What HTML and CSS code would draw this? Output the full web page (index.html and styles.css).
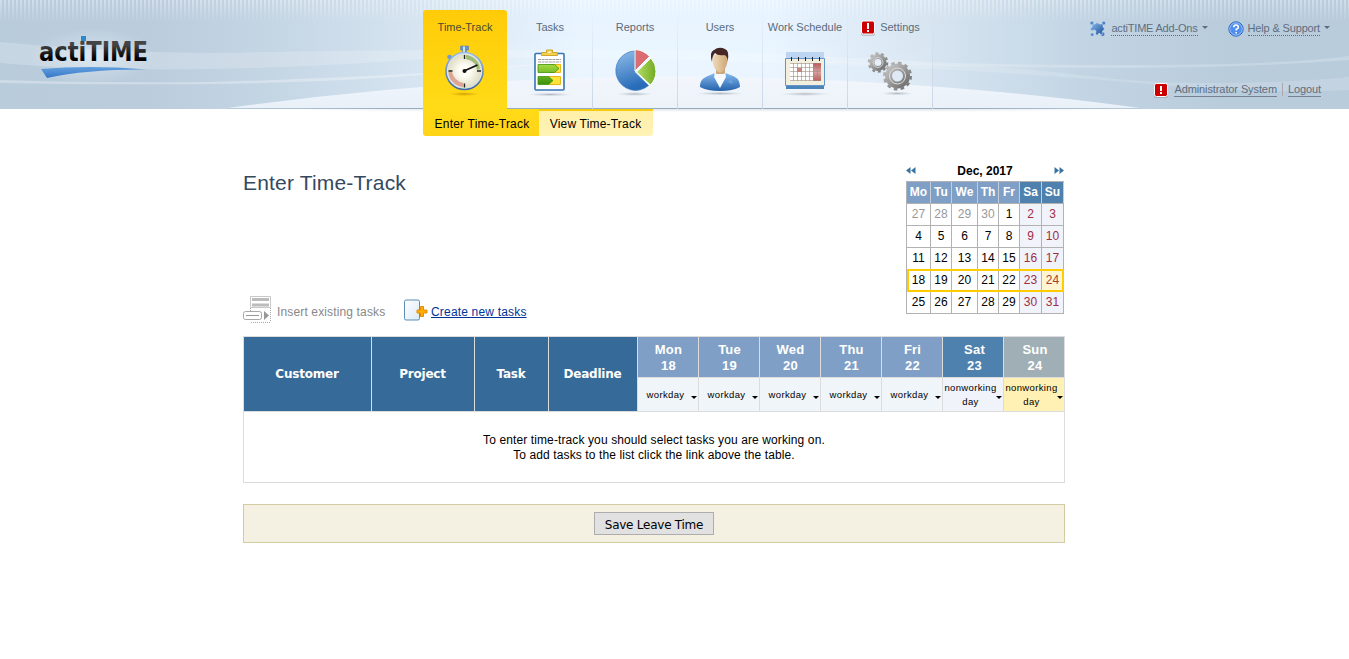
FILE: index.html
```html
<!DOCTYPE html>
<html lang="en">
<head>
<meta charset="utf-8">
<title>actiTIME - Enter Time-Track</title>
<link rel="stylesheet" href="styles.css">
</head>
<body>
<header class="header">
  <svg class="header-bg" width="1349" height="112" viewBox="0 0 1349 112">
    <defs>
      <linearGradient id="sky"><stop offset="0" stop-color="#b9ccdc"/><stop offset=".11" stop-color="#bbcddd"/><stop offset=".2" stop-color="#c4d5e4"/><stop offset=".32" stop-color="#d8e6f2"/><stop offset=".43" stop-color="#e8f4ff"/><stop offset=".57" stop-color="#e8f4ff"/><stop offset=".68" stop-color="#d8e6f2"/><stop offset=".8" stop-color="#c3d5e4"/><stop offset=".91" stop-color="#b9ccdc"/><stop offset="1" stop-color="#b9ccdc"/></linearGradient>
      <linearGradient id="fade" x2="0" y2="1"><stop offset="0" stop-color="#fff"/><stop offset="1" stop-color="#000"/></linearGradient>
      <linearGradient id="hill" x2="0" y2="1"><stop offset="0" stop-color="#f1f6fd"/><stop offset="1" stop-color="#e9f0f7"/></linearGradient>
      <linearGradient id="shade" x2="0" y2="1"><stop offset="0" stop-color="#e2e4e7"/><stop offset="1" stop-color="#fff"/></linearGradient>
      <linearGradient id="edge"><stop offset="0" stop-color="#b8cbdb"/><stop offset=".2" stop-color="#95abc1"/><stop offset=".8" stop-color="#95abc1"/><stop offset="1" stop-color="#b8cbdb"/></linearGradient>
      <linearGradient id="sides"><stop offset="0" stop-color="#fff" stop-opacity="0"/><stop offset=".2" stop-color="#fff"/><stop offset=".8" stop-color="#fff"/><stop offset="1" stop-color="#fff" stop-opacity="0"/></linearGradient>
      <pattern id="stripes" width="4" height="22" patternUnits="userSpaceOnUse"><path d="M0 0h2v22H0z" fill="#fff" opacity=".36"/></pattern>
      <mask id="fadeMask"><path d="M0 0h1349v22H0z" fill="url(#fade)"/></mask>
      <mask id="sideMask"><path d="M300 109h800v3H300z" fill="url(#sides)"/></mask>
    </defs>
    <path d="M0 0h1349v109H0z" fill="url(#sky)"/>
    <path d="M0 0h1349v22H0z" fill="url(#stripes)" mask="url(#fadeMask)"/>
    <g fill="#fff">
      <path opacity=".2" d="M0 42Q100 52 210 53Q320 51 423 50H680Q800 55 930 62Q1000 65 1140 65T1349 56V60Q1240 68 1130 68Q1000 68 930 65L680 60Q550 56 423 59Q320 67 210 69Q90 71 0 63z"/>
      <path opacity=".3" d="M0 80Q100 83 210 82Q320 79 423 73L560 62V63L423 75Q320 83 210 84Q90 85 0 83z"/>
      <path opacity=".15" d="M680 58L930 64Q1010 66 1080 75T1220 83Q1300 82 1349 77V90Q1260 94 1160 85Q1040 74 930 69L680 60z"/>
    </g>
    <path d="M228 108Q450 77 680 76Q930 79 1140 108z" fill="url(#hill)"/>
    <path d="M300 109h800v3H300z" fill="url(#shade)" mask="url(#sideMask)"/>
    <path d="M228 108h912v1H228z" fill="url(#edge)"/>
  </svg>
  <svg class="logo" width="132" height="60" viewBox="-8 -6 132 60">
    <defs>
      <linearGradient id="ink" x2="0" y2="1"><stop offset=".3" stop-color="#444"/><stop offset=".75" stop-color="#000"/></linearGradient>
      <linearGradient id="swoosh" x2="0" y2="1"><stop offset="0" stop-color="#629fdc"/><stop offset="1" stop-color="#3477c9"/></linearGradient>
      <radialGradient id="halo"><stop offset="0" stop-color="#fff" stop-opacity=".4"/><stop offset="1" stop-color="#fff" stop-opacity="0"/></radialGradient>
    </defs>
    <ellipse cx="56" cy="24" rx="63" ry="28" fill="url(#halo)"/>
    <text class="logo-text" x="3" y="28.500" textLength="109" lengthAdjust="spacingAndGlyphs" fill="url(#ink)">actiTIME</text>
    <path d="M45 4h5v5h-5z" fill="#2d88cc"/>
    <path d="M5 37Q55 33 111 37.500Q52 37 11 46z" fill="url(#swoosh)"/>
  </svg>
  <nav class="tabs">
    <a class="tab tab-active"><span>Time-Track</span>
      <svg width="50" height="52" viewBox="0 0 50 52"><defs><radialGradient id="dial"><stop offset=".3" stop-color="#fffff8"/><stop offset="1" stop-color="#dfddc4"/></radialGradient><linearGradient id="steel" x2="0" y2="1"><stop offset="0" stop-color="#9dbbe0"/><stop offset="1" stop-color="#42699c"/></linearGradient><radialGradient id="goldShadow"><stop offset="0" stop-color="#b68100" stop-opacity=".7"/><stop offset="1" stop-color="#c79300" stop-opacity="0"/></radialGradient><radialGradient id="softShadow"><stop offset="0" stop-color="#8b919b" stop-opacity=".6"/><stop offset="1" stop-color="#b0b6bf" stop-opacity="0"/></radialGradient></defs><ellipse cx="24" cy="50" rx="15" ry="2" fill="url(#goldShadow)"/><path d="M20.500 2h8v4h-2v4h-4V6h-2z" fill="#6792c6" stroke="#4c7bb5" stroke-width=".5"/><path d="M23 2.500h2v6h-2z" fill="#cfe2f5"/><circle cx="9.500" cy="13" r="2.300" fill="#6f9bcc"/><circle cx="24.500" cy="27" r="18.500" fill="#d9e8f5" stroke="url(#steel)" stroke-width="1.600"/><circle cx="24.500" cy="27" r="16.800" fill="url(#dial)"/><path d="M26 15V11A16 16 0 0 1 40 25L37 26Q36 17 26 15z" fill="#7faa50" opacity=".7"/><path d="M12 28H8.500A16 16 0 0 0 23.500 43V39Q14 37 12 28z" fill="#d98275" opacity=".65"/><path d="M24.500 11v4M24.500 39.500v4M8.500 27h4M37 27h4" stroke="#222" stroke-width="1.300"/><path d="M24 27L37.500 21" stroke="#111" stroke-width="1.700"/><circle cx="24.500" cy="27" r="2" fill="#111"/></svg></a>
    <a class="tab"><span>Tasks</span>
      <svg width="50" height="52" viewBox="0 0 50 52"><defs><linearGradient id="green" x2="0" y2="1"><stop offset="0" stop-color="#a5da42"/><stop offset="1" stop-color="#39900b"/></linearGradient></defs><ellipse cx="25" cy="50.500" rx="22" ry="2" fill="url(#softShadow)"/><rect x="10" y="9.500" width="29" height="36.500" rx="1" fill="#fff" stroke="#3974b5" stroke-width="1.600"/><path d="M16.500 11.500v-3h5V6h6v2.500h5v3z" fill="#f4cf50" stroke="#cda72a"/><path d="M23.500 7.500h2V9h-2z" fill="#fff"/><path d="M13 15.500h23M13 18h23" stroke="#888" stroke-width=".8" stroke-dasharray="3 .6"/><path d="M25.500 20.500h10v8h-10zM23.500 32.500h12v8h-12z" fill="#ffe33b" stroke="#e5b817"/><path d="M13 20.500H29.500l4.500 4-4.500 4H13zM13 32.500H23.500l4.500 4-4.500 4H13z" fill="url(#green)" stroke="#3d930e" stroke-width=".8"/></svg></a>
    <a class="tab"><span>Reports</span>
      <svg width="50" height="52" viewBox="0 0 50 52"><defs><linearGradient id="pie" x2=".3" y2="1"><stop offset="0" stop-color="#91bfea"/><stop offset="1" stop-color="#286bb8"/></linearGradient><linearGradient id="lime"><stop offset="0" stop-color="#b6dd68"/><stop offset="1" stop-color="#70aa20"/></linearGradient></defs><ellipse cx="24.500" cy="50" rx="18" ry="2" fill="url(#softShadow)"/><path d="M24.500 7V28L38.500 41.500A19.700 19.700 0 1 1 24.500 7z" fill="url(#pie)" stroke="#3c79bd" stroke-width=".7"/><path d="M25 5.500A21 21 0 0 1 39.500 12.500L25 27z" fill="#d96d72" stroke="#fff"/><path d="M41 14A20 20 0 0 1 40.500 41L26.500 28z" fill="url(#lime)" stroke="#fff"/></svg></a>
    <a class="tab"><span>Users</span>
      <svg width="50" height="52" viewBox="0 0 50 52"><defs><linearGradient id="suit" x2="0" y2="1"><stop offset="0" stop-color="#86b9ee"/><stop offset="1" stop-color="#2462ab"/></linearGradient><linearGradient id="skin"><stop offset="0" stop-color="#f1dbb9"/><stop offset="1" stop-color="#cda776"/></linearGradient></defs><ellipse cx="25" cy="49.500" rx="24" ry="2" fill="url(#softShadow)"/><g transform="translate(0 1)"><path d="M21 23h9v12h-9z" fill="#cba77b"/><path d="M18 29h14v17H18z" fill="#f4f7fb"/><path d="M19 28L25 40L31 28C38 32 45 31 45 42Q38 46 25 46T5 42C5 31 14 32 19 28z" fill="url(#suit)"/><path d="M20 28l5 6 5-6 1 4-6 11-6-11z" fill="#f7faff"/><path d="M17.500 12Q17 25 25 27.500Q33 25 32.500 12Q25 4 17.500 12z" fill="url(#skin)"/><path d="M17 17Q14 7 19 5Q24 1 30 4Q35 6 32.500 17Q33 11 29 10Q23 11 20 8Q17 11 17 17z" fill="#452726"/><path d="M33 37l3-3 2 5z" fill="#6aa2dc"/></g></svg></a>
    <a class="tab"><span>Work Schedule</span>
      <svg width="50" height="52" viewBox="0 0 50 52"><defs><linearGradient id="red" x2="0" y2="1"><stop offset="0" stop-color="#bb5354"/><stop offset=".5" stop-color="#dca0a0"/><stop offset="1" stop-color="#bd5c5d"/></linearGradient></defs><ellipse cx="25" cy="50" rx="25" ry="2" fill="url(#softShadow)"/><g transform="translate(0 1)"><path d="M6 7h38v6H6z" fill="#bdd5f0"/><path d="M6 39h38v5H6z" fill="#4b83bb"/><path d="M5.500 13.500h39v27h-39z" fill="#f2efdf" stroke="#6594c6"/><path d="M10 18h31v18H10z" fill="#fff"/><path d="M17 23h5v4h-5z" fill="#d38182"/><path d="M33 18h8v18h-8z" fill="url(#red)"/><path d="M10 18.500h31M10 22.500h31M10 26.500h31M10 31.500h31M10 35.500h31M13.500 18v18M17.500 18v18M21.500 18v18M25.500 18v18M29.500 18v18M33.500 18v18M37.500 18v18" stroke="#9b8d7a" stroke-width=".6"/><path d="M11.500 12v4M18.500 12v4M25.500 12v4M32.500 12v4M39.500 12v4" stroke="#222"/></g></svg></a>
    <a class="tab"><span class="with-alert"><svg width="16" height="16" viewBox="0 0 16 16"><rect x="1" y="2" width="14" height="14" rx="2" fill="#aaa" opacity=".6"/><rect x="1.500" y="1" width="13" height="13" rx="2" fill="#c00" stroke="#fff"/><path d="M7 3h2v6H7zM7 10h2v2H7z" fill="#fff"/></svg>Settings</span>
      <svg width="50" height="52" viewBox="0 0 50 52"><defs><linearGradient id="metal" x2="1" y2="1"><stop offset="0" stop-color="#c2c2c2"/><stop offset="1" stop-color="#707070"/></linearGradient></defs><ellipse cx="32" cy="49.500" rx="16" ry="2" fill="url(#softShadow)"/><g fill="none" stroke="url(#metal)" transform="translate(0 1)"><circle cx="13" cy="17.500" r="6" stroke-width="5"/><circle cx="13" cy="17.500" r="9" stroke-width="2.600" stroke-dasharray="2.900 2.755"/><circle cx="32.500" cy="31" r="9" stroke-width="7"/><circle cx="32.500" cy="31" r="13" stroke-width="3" stroke-dasharray="3.600 3.206"/><circle cx="32.500" cy="31" r="8" stroke="#ddd" stroke-width="1"/><circle cx="13" cy="17.500" r="5" stroke="#ddd" stroke-width=".8"/></g></svg></a>
  </nav>
  <div class="user-area">
    <div class="menu-row">
      <svg class="addon-icon" width="17" height="17" viewBox="0 0 17 17"><defs><linearGradient id="puzzle" x2="1" y2="1"><stop offset="0" stop-color="#8dbdf0"/><stop offset="1" stop-color="#184c95"/></linearGradient></defs><g fill="url(#puzzle)" stroke="#d3e5f6" stroke-width=".5"><circle cx="2.800" cy="3" r="2"/><circle cx="14.500" cy="3" r="2"/><circle cx="3" cy="14.500" r="1.700"/><circle cx="13.500" cy="14" r="2.300"/><path d="M3 4L6 4Q8 1 10.500 4L14 4L14 7Q17 9 13.500 11L13 15L10 13Q8 17 6.500 13.500Q8 10 5 10L2.500 11Q0 8 3 7z"/></g></svg>
      <a class="menu-link">actiTIME Add-Ons</a><i class="caret"></i>
      <svg class="help-icon" width="16" height="16" viewBox="0 0 16 16"><circle cx="8" cy="8" r="7.200" fill="#4f8eec" stroke="#3468bd"/><circle cx="8" cy="8" r="6.200" fill="none" stroke="#b5d3fa" stroke-width=".7"/><path d="M5.700 6.300Q5.700 4 8 4T10.300 6.200Q10.300 7.500 8.200 8.300V9.500M8.200 11v1.500" fill="none" stroke="#fff" stroke-width="1.600"/></svg>
      <a class="menu-link help">Help &amp; Support</a><i class="caret"></i>
    </div>
    <div class="account-row">
      <svg width="16" height="16" viewBox="0 0 16 16"><rect x="1" y="2" width="14" height="14" rx="2" fill="#8fa0af" opacity=".7"/><rect x="1.500" y="1.500" width="13" height="13" rx="2" fill="#c00" stroke="#fff"/><path d="M7 4h2v5H7zM7 10h2v2H7z" fill="#fff"/></svg>
      <a class="account-link">Administrator System</a><i class="divider"></i><a class="account-link">Logout</a>
    </div>
  </div>
</header>
<nav class="subnav"><a class="sub sub-active"><span>Enter Time-Track</span></a><a class="sub"><span>View Time-Track</span></a></nav>
<main class="content">
  <section class="top">
    <div class="intro">
      <h1>Enter Time-Track</h1>
      <div class="actions">
        <svg width="28" height="28" viewBox="0 0 28 28"><path d="M7.500 .5h20v11h-20z" fill="#fff" stroke="#c8c8c8"/><path d="M9 2h17v3H9zM9 7.500h17v3H9z" fill="#bcbcbc"/><path d="M27.500 12v14M8 26.500h20M7.500 12v3" stroke="#aaa" stroke-dasharray="1 1"/><rect x=".5" y="15.500" width="18" height="8" rx="2" fill="#fff" stroke="#a8a8a8"/><path d="M3 19.500h13" stroke="#999"/><path d="M21 15l5 4.500-5 4.500z" fill="#999"/></svg>
        <span class="insert">Insert existing tasks</span>
        <svg class="create-icon" width="24" height="22" viewBox="0 0 24 22"><defs><linearGradient id="page" x2="1" y2="1"><stop offset="0" stop-color="#fff"/><stop offset="1" stop-color="#dceaf7"/></linearGradient></defs><rect x=".5" y="1" width="15" height="20" rx="1.500" fill="url(#page)" stroke="#5b8db8"/><path d="M16.500 7.500h3v3.500h3.500v3h-3.500v3.500h-3V14H13v-3h3.500z" fill="#ffae00" stroke="#e58e00"/></svg>
        <a class="create">Create new tasks</a>
      </div>
    </div>
    <div class="calendar">
      <div class="cal-head"><svg width="10" height="7" viewBox="0 0 10 7"><path d="M4.500 0v7L0 3.500zM9.500 0v7L5 3.500z" fill="#3974a3"/></svg><b>Dec, 2017</b><svg width="10" height="7" viewBox="0 0 10 7"><path d="M.5 0v7L5 3.500zM5.500 0v7L10 3.500z" fill="#3974a3"/></svg></div>
      <div class="cal-grid">
        <b>Mo</b><b>Tu</b><b>We</b><b>Th</b><b>Fr</b><b class="end">Sa</b><b class="end">Su</b>
        <span class="old">27</span><span class="old">28</span><span class="old">29</span><span class="old">30</span><span>1</span><span class="off">2</span><span class="off">3</span>
        <span>4</span><span>5</span><span>6</span><span>7</span><span>8</span><span class="off">9</span><span class="off">10</span>
        <span>11</span><span>12</span><span>13</span><span>14</span><span>15</span><span class="off">16</span><span class="off">17</span>
        <span>18</span><span>19</span><span>20</span><span>21</span><span>22</span><span class="off">23</span><span class="off today">24</span>
        <span>25</span><span>26</span><span>27</span><span>28</span><span>29</span><span class="off">30</span><span class="off">31</span>
        <div class="week-mark"></div>
      </div>
    </div>
  </section>
  <section class="sheet">
    <div class="col">Customer</div><div class="col">Project</div><div class="col">Task</div><div class="col">Deadline</div>
    <div class="day">Mon<br>18</div><div class="day">Tue<br>19</div><div class="day">Wed<br>20</div><div class="day">Thu<br>21</div><div class="day">Fri<br>22</div><div class="day sat">Sat<br>23</div><div class="day sun">Sun<br>24</div>
    <div class="kind"><span>workday</span><i></i></div><div class="kind"><span>workday</span><i></i></div><div class="kind"><span>workday</span><i></i></div><div class="kind"><span>workday</span><i></i></div><div class="kind"><span>workday</span><i></i></div><div class="kind rest"><span>nonworking<br>day</span><i></i></div><div class="kind rest now"><span>nonworking<br>day</span><i></i></div>
    <div class="empty"><span>To enter time-track you should select tasks you are working on.</span><span>To add tasks to the list click the link above the table.</span></div>
  </section>
  <div class="savebar"><button class="save">Save Leave Time</button></div>
</main>
</body>
</html>
```
FILE: styles.css
```css
* { box-sizing: border-box; }
body { margin: 0; background: #fff; font: 12px "Liberation Sans", Arial, sans-serif; color: #000; }

.header { position: relative; display: flex; height: 109px; }
.header > * { position: relative; }
.header .header-bg { position: absolute; left: 0; top: 0; }
.logo { flex: none; margin: 26px 263px 0 28px; overflow: visible; }
.logo-text { font: bold 27px "DejaVu Sans Condensed", "DejaVu Sans", sans-serif; }
.tabs { display: flex; flex: none; padding-top: 10px; }
.tab { width: 85px; height: 99px; padding-top: 10px; display: flex; flex-direction: column; align-items: center; font-size: 11px; line-height: 15px; color: #5b6b7b; white-space: nowrap; border-right: 1px solid; border-image: linear-gradient(rgba(200,214,235,0), #c9d5e8) 1; background: linear-gradient(rgba(255,255,255,0), rgba(255,255,255,.15) 98px, #95abc1 98px); }
.tab > svg { margin-top: 9px; flex: none; }
.tab-active { background: linear-gradient(#ffcb08, #ffdb17); border: 0; border-image: none; border-radius: 3px 3px 0 0; color: #4c4a35; width: 84px; margin-right: 1px; }
.with-alert { display: flex; gap: 4px; height: 15px; }
.user-area { margin-left: auto; padding: 20px 19px 0 0; font-size: 11px; line-height: 15px; color: #5f6e7f; white-space: nowrap; }
.menu-row, .account-row { display: flex; align-items: center; height: 17px; }
.menu-link { margin-left: 5px; border-bottom: 1px dotted #5f6e7f; height: 15px; line-height: 15px; letter-spacing: -.2px; }
.help { letter-spacing: -.15px; margin-left: 4px; }
.caret { margin: -2px 0 0 4px; border: 3px solid transparent; border-top-color: #5f6e7f; border-bottom: 0; }
.help-icon { margin-left: 20px; }
.account-row { justify-content: flex-end; margin-top: 44px; padding-right: 9px; }
.account-link { border-bottom: 1px solid #76808f; height: 14px; line-height: 13px; margin-left: 5px; letter-spacing: -.1px; }
.divider { width: 1px; height: 13px; background: #aaa8b1; margin-left: 5px; }

.subnav { position: relative; display: flex; margin-left: 423px; height: 27px; }
.sub { width: 114px; height: 27px; padding: 8px 1px 0 0; text-align: center; line-height: 15px; background: linear-gradient(#f7cb10 2px, #fff0a9 2px, #fff3b6); border-radius: 0 0 3px; letter-spacing: .2px; }
.sub-active { width: 116px; background: linear-gradient(#ffdb17, #ffd418); border-radius: 0 0 0 3px; padding-left: 2px; padding-right: 0; }

.content { padding: 26px 284px 0 243px; }
.top { display: flex; justify-content: space-between; height: 174px; }
h1 { margin: 0; font-weight: normal; font-size: 21px; line-height: 24px; padding-top: 9px; color: #34495e; letter-spacing: .17px; }
.actions { display: flex; align-items: center; height: 28px; margin-top: 101px; white-space: nowrap; }
.insert { color: #888; margin-left: 6px; line-height: 14px; padding-top: 4px; width: 109px; letter-spacing: .14px; }
.create-icon { margin: 0 3px 0 18px; }
.create { color: #003399; text-decoration: underline; padding-top: 4px; line-height: 14px; letter-spacing: .18px; }

.calendar { width: 159px; }
.cal-head { height: 20px; margin-top: -1px; display: flex; justify-content: space-between; align-items: center; padding: 0 1px 1px 0; }
.cal-grid { position: relative; display: grid; width: 158px; grid-template-columns: 23px 20px 25px 20px 20px 21px 21px; grid-auto-rows: 21px; gap: 1px; padding: 1px; background: #b2b2b2; text-align: center; line-height: 20px; }
.cal-grid b { background: #7f9fc6; color: #fff; box-shadow: 1px 0 #c3cedb; }
.cal-grid .end { background: #4f81ae; }
.cal-grid .old { color: #999; }
.cal-grid span { background: #fff; }
.cal-grid .off { background: #f0f3fa; color: #a02c45; }
.cal-grid .today { background: #fff5d3; color: #aa3d2d; }
.week-mark { position: absolute; left: 1px; top: 88px; width: 157px; height: 23px; border: 2px solid #fc0; }

.sheet { display: grid; width: 822px; grid-template-columns: 127px 102px 73px 88px repeat(7, 60px); grid-template-rows: 40px 33px 70px; gap: 1px; padding: 1px; background: #dcdcdc; }
.col { grid-row: 1 / 3; background: #366a99; color: #fff; display: flex; align-items: center; justify-content: center; padding-right: 1px; font: bold 12px "DejaVu Sans", sans-serif; letter-spacing: -.2px; }
.day { grid-row: 1; background: #7f9fc6; color: #fff; text-align: center; font-weight: bold; font-size: 13px; line-height: 16px; padding: 5px 0 0 1px; letter-spacing: .2px; }
.sat { background: #4f81ae; padding-left: 3px; }
.sun { background: #9fafb5; padding-left: 2px; }
.kind { position: relative; background: #f0f5fa; font-size: 9.500px; line-height: 14px; text-align: center; display: flex; align-items: center; justify-content: center; padding-right: 5px; white-space: nowrap; letter-spacing: .36px; }
.kind span { padding-top: 1px; }
.kind i { position: absolute; right: 1px; top: 18px; border: 3px solid transparent; border-top-color: #000; border-bottom: 0; }
.rest { background: #f0f3fa; }
.now { background: #fff0b3; }
.empty { grid-column: 1 / -1; background: #fff; display: flex; flex-direction: column; align-items: center; padding-top: 21px; line-height: 15px; letter-spacing: .11px; }
.savebar { width: 822px; height: 39px; margin-top: 21px; background: #f5f1e2; border: 1px solid #d3cba1; display: flex; align-items: center; justify-content: center; }
.save { width: 120px; height: 23px; padding: 2px 0 0; background: #e1e1e1; border: 1px solid #adadad; color: #000; font: 12px "DejaVu Sans", sans-serif; letter-spacing: -.25px; white-space: nowrap; }
```
